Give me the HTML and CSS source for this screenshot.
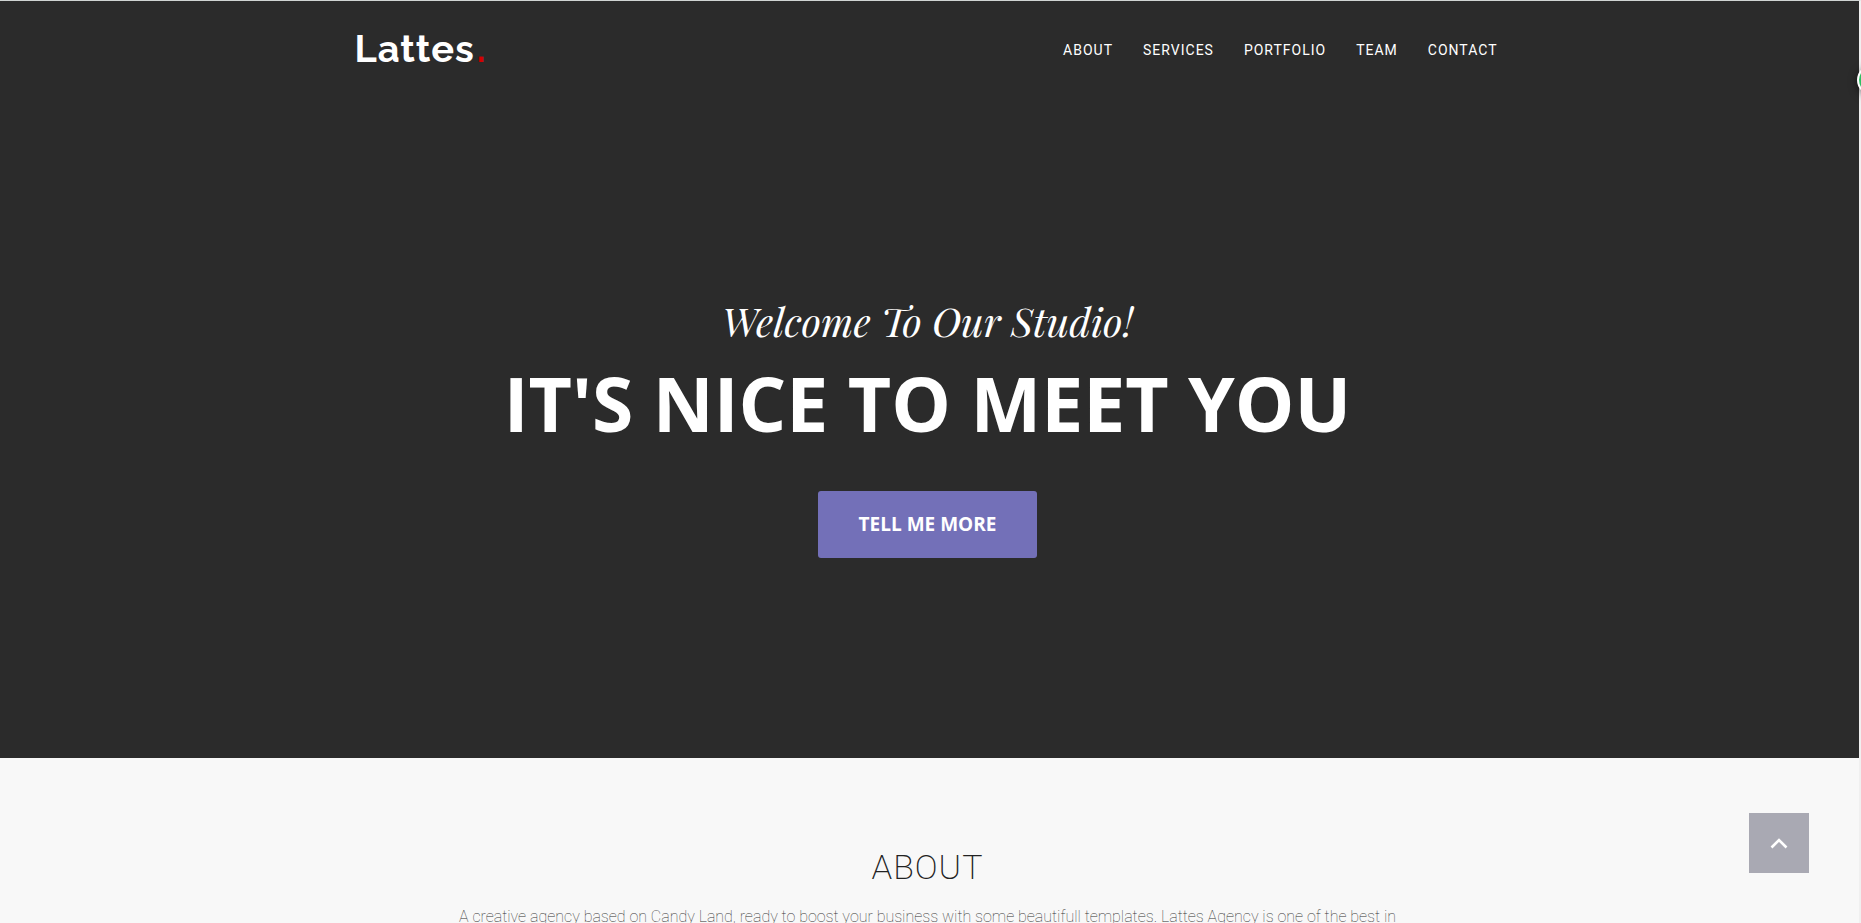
FILE: index.html
```html
<!DOCTYPE html>
<html lang="en">
<head>
<meta charset="utf-8">
<title>Lattes</title>
<link rel="stylesheet" href="styles.css">
</head>
<body>
<div class="page">
  <header class="hero">
    <nav class="container navbar">
      <a class="brand" href="#top">Lattes<span class="brand-dot">.</span></a>
      <ul class="menu">
        <li><a href="#about">About</a></li>
        <li><a href="#services">Services</a></li>
        <li><a href="#portfolio">Portfolio</a></li>
        <li><a href="#team">Team</a></li>
        <li><a href="#contact">Contact</a></li>
      </ul>
    </nav>
    <div class="intro">
      <p class="intro-lead">Welcome To Our Studio!</p>
      <h1 class="intro-heading">It's Nice To Meet You</h1>
      <a class="button" href="#about">Tell Me More</a>
    </div>
  </header>
  <section class="about" id="about">
    <h2 class="section-title">About</h2>
    <p class="section-text">A creative agency based on Candy Land, ready to boost your business with some beautifull templates. Lattes Agency is one of the best in</p>
  </section>
  <button class="to-top" type="button" aria-label="Back to top">
    <svg width="18" height="12" viewBox="0 0 18 12" aria-hidden="true"><path d="M1.500 10.500 9 3 16.500 10.500" fill="none" stroke="#fff" stroke-width="2.600"/></svg>
  </button>
  <div class="bubble"></div>
</div>
</body>
</html>
```
FILE: styles.css
```css
* { box-sizing: border-box; }

body {
  margin: 0;
  overflow: hidden;
  font-family: Roboto, "Liberation Sans", sans-serif;
}

a { color: inherit; text-decoration: none; }

.page {
  position: relative;
  height: 100vh;
  background: #f8f8f8;
  border-top: 1px solid #d0d4d3;
  border-right: 2px solid #f0f0f0;
}

.hero {
  padding: 24px 4px 200px 0;
  background: #2b2b2b;
  color: #fff;
}

.container {
  max-width: 1170px;
  margin: 0 auto;
  padding: 0 15px 0 12px;
}

.navbar {
  display: flex;
  align-items: center;
  justify-content: space-between;
}

.brand {
  font: 700 38px/48px Raleway, Montserrat, Lato, sans-serif;
  letter-spacing: 1px;
}

.brand-dot {
  margin-left: 2px;
  color: #d50000;
}

.menu {
  display: flex;
  gap: 30px;
  margin: 0;
  padding: 2px 0 0;
  list-style: none;
  font-size: 14px;
  font-weight: 400;
  line-height: 20px;
  letter-spacing: 1px;
  text-transform: uppercase;
}

.intro {
  display: flex;
  flex-direction: column;
  align-items: center;
  padding-top: 226px;
  font-family: "Open Sans", sans-serif;
  text-align: center;
}

.intro-lead {
  margin: 0 0 23px;
  font: italic 40px/44px "Playfair Display", "Liberation Serif", serif;
}

.intro-heading {
  margin: 0 0 50px;
  font-size: 75px;
  font-weight: 700;
  line-height: 75px;
  text-transform: uppercase;
}

.button {
  padding: 20px 41px;
  border-radius: 3px;
  background: #7370b8;
  font-size: 19px;
  font-weight: 700;
  line-height: 27px;
  text-transform: uppercase;
}

.about {
  padding: 89px 4px 0 0;
  text-align: center;
}

.section-title {
  margin: 0 0 18px;
  color: #222;
  font-size: 34px;
  font-weight: 200;
  line-height: 40px;
  letter-spacing: 1px;
  text-transform: uppercase;
}

.section-text {
  margin: 0;
  color: #333;
  font-size: 16px;
  font-weight: 100;
  line-height: 24px;
}

.to-top {
  position: absolute;
  right: 50px;
  bottom: 50px;
  display: flex;
  align-items: center;
  justify-content: center;
  width: 60px;
  height: 60px;
  padding: 0;
  border: 0;
  background: #a9a9b3;
}

.bubble {
  position: absolute;
  top: 64px;
  right: -28px;
  width: 30px;
  height: 30px;
  border: 2px solid #fff;
  border-radius: 50%;
  background: #2fbf62;
  box-shadow: 0 2px 8px #0008;
}
```
